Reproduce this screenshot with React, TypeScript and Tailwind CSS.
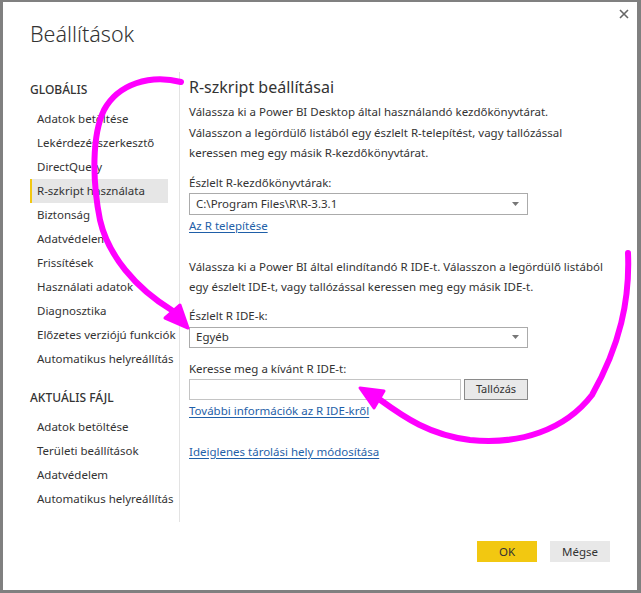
import React from "react";

const items1 = [
  "Adatok betöltése",
  "Lekérdezésszerkesztő",
  "DirectQuery",
  "R-szkript használata",
  "Biztonság",
  "Adatvédelem",
  "Frissítések",
  "Használati adatok",
  "Diagnosztika",
  "Előzetes verziójú funkciók",
  "Automatikus helyreállítás",
];
const items2 = [
  "Adatok betöltése",
  "Területi beállítások",
  "Adatvédelem",
  "Automatikus helyreállítás",
];

function Caret() {
  return (
    <svg width="7" height="4" viewBox="0 0 7 4" className="mr-[8px]">
      <path d="M0 0 L7 0 L3.5 4 Z" fill="#777" />
    </svg>
  );
}

function NavItem({ label, active }: { label: string; active?: boolean }) {
  return (
    <div
      className={
        "h-[24px] flex items-center w-[138px] whitespace-nowrap text-[11.5px] text-[#333] " +
        (active ? "bg-[#e6e6e6] border-l-2 border-[#f2c811] pl-[5px]" : "pl-[7px]")
      }
    >
      {label}
    </div>
  );
}

export default function App() {
  return (
    <div className="relative w-[641px] h-[593px] font-['Noto_Sans','DejaVu_Sans',sans-serif] text-[#333]">
      <div className="w-[641px] h-[593px] bg-white border-l-[3px] border-t-[2px] border-r-[4px] border-b-[3px] border-[#808080] flex flex-col">
        <div className="relative h-[48px] pt-[16px] pl-[27px]">
          <div className="text-[21.5px] leading-[32px] font-light text-[#333]">Beállítások</div>
        </div>
        <div className="mt-[22px] flex h-[450px]">
          <div className="w-[177px] pl-[27px] border-r border-[#e3e3e3] shrink-0">
            <div className="h-[20px] mt-[8px] leading-[20px] text-[12px] font-medium text-[#333]">GLOBÁLIS</div>
            <div className="mt-[7px]">
              {items1.map((l) => (
                <NavItem key={l} label={l} active={l === "R-szkript használata"} />
              ))}
            </div>
            <div className="h-[20px] mt-[17px] leading-[20px] text-[12px] font-medium text-[#333] whitespace-nowrap">AKTUÁLIS FÁJL</div>
            <div className="mt-[7px]">
              {items2.map((l) => (
                <NavItem key={l} label={l} />
              ))}
            </div>
          </div>
          <div className="pl-[9px] pt-[4px] text-[11.5px]">
            <div className="text-[16px] leading-[22px] text-[#333]">R-szkript beállításai</div>
            <div className="mt-[4px] leading-[20.5px]">
              <div>Válassza ki a Power BI Desktop által használandó kezdőkönyvtárat.</div>
              <div>Válasszon a legördülő listából egy észlelt R-telepítést, vagy tallózással</div>
              <div>keressen meg egy másik R-kezdőkönyvtárat.</div>
            </div>
            <div className="mt-[9px] leading-[20px]">Észlelt R-kezdőkönyvtárak:</div>
            <div className="w-[339px] h-[22px] border border-[#ababab] flex items-center justify-between pl-[6px]">
              <span>C:\Program Files\R\R-3.3.1</span>
              <Caret />
            </div>
            <div className="leading-[20px] mt-[1px]">
              <span className="text-[#1f5fa8] underline underline-offset-2">Az R telepítése</span>
            </div>
            <div className="mt-[21px] leading-[20.5px]">
              <div>Válassza ki a Power BI által elindítandó R IDE-t. Válasszon a legördülő listából</div>
              <div>egy észlelt IDE-t, vagy tallózással keressen meg egy másik IDE-t.</div>
            </div>
            <div className="mt-[8px] leading-[20px]">Észlelt R IDE-k:</div>
            <div className="mt-[1px] w-[339px] h-[21px] border border-[#ababab] flex items-center justify-between pl-[6px]">
              <span>Egyéb</span>
              <Caret />
            </div>
            <div className="mt-[11px] leading-[20px]">Keresse meg a kívánt R IDE-t:</div>
            <div className="flex gap-[3px]">
              <div className="w-[272px] h-[21px] border border-[#c4c4c4]" />
              <div className="w-[64px] h-[21px] border border-[#8a8a8a] bg-[#e9e9e9] flex items-center justify-center text-[11px]">
                Tallózás
              </div>
            </div>
            <div className="leading-[20px] mt-[1px]">
              <span className="text-[#1f5fa8] underline underline-offset-2">További információk az R IDE-kről</span>
            </div>
            <div className="leading-[20px] mt-[21px]">
              <span className="text-[#1f5fa8] underline underline-offset-2">Ideiglenes tárolási hely módosítása</span>
            </div>
          </div>
        </div>
        <div className="mt-[19px] flex justify-end gap-[13px] pr-[27px]">
          <div className="w-[60px] h-[21px] bg-[#f2c811] flex items-center justify-center text-[11.5px]">OK</div>
          <div className="w-[60px] h-[21px] bg-[#e8e8e8] flex items-center justify-center text-[11.5px]">Mégse</div>
        </div>
      </div>
      <svg className="absolute right-[12px] top-[9px]" width="10" height="10" viewBox="0 0 10 10">
        <path d="M1 1 L9 9 M9 1 L1 9" stroke="#666" strokeWidth="1.6" />
      </svg>
      <svg className="absolute left-0 top-0 pointer-events-none" width="641" height="593" viewBox="0 0 641 593">
        <path
          d="M181 82 C150 74 118 84 104 110 C92 135 92 180 100 220 C108 255 135 288 173 311"
          fill="none"
          stroke="#ff00ff"
          strokeWidth="6"
          strokeLinecap="round"
        />
        <polygon points="188,328 165,318 180,305" fill="#ff00ff" stroke="#ff00ff" strokeWidth="3" strokeLinejoin="round" />
        <path
          d="M628 253 C630 300 620 345 592 395 C565 430 520 445 470 440 C430 435 405 418 379 399"
          fill="none"
          stroke="#ff00ff"
          strokeWidth="6"
          strokeLinecap="round"
        />
        <polygon points="360,388 384,391 374,408" fill="#ff00ff" stroke="#ff00ff" strokeWidth="3" strokeLinejoin="round" />
      </svg>
    </div>
  );
}
